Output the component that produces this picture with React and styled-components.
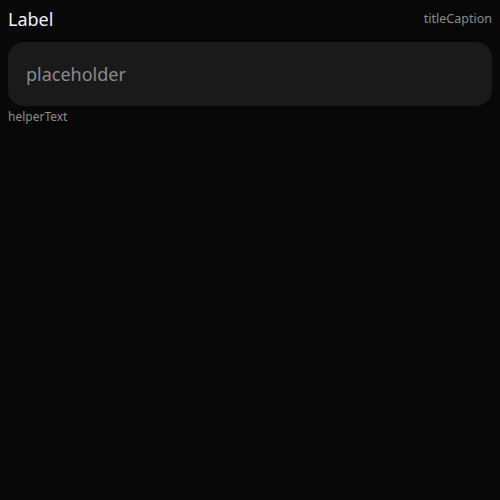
import React, { useState } from 'react'
import styled, { createGlobalStyle } from 'styled-components'

const GlobalStyle = createGlobalStyle`
  html, body {
    margin: 0;
    padding: 0;
    background: #080808;
    height: 100%;
  }
  body {
    font-family: "Noto Sans", "DejaVu Sans", sans-serif;
  }
`;

const Field = styled.div`
  display: flex;
  flex-direction: column;
  padding: 8px;
`;

const Header = styled.div`
  display: flex;
  justify-content: space-between;
  align-items: center;
  height: 22px;
  margin-bottom: 12px;
`;

const Label = styled.label`
  color: #f2f2f2;
  font-size: 18px;
  line-height: 22px;
`;

const Caption = styled.span`
  color: #8c8c8c;
  font-size: 12.5px;
  line-height: 22px;
`;

const Input = styled.input`
  box-sizing: border-box;
  width: 100%;
  height: 64px;
  border: none;
  outline: none;
  border-radius: 16px;
  background: #1a1a1a;
  padding: 0 18px;
  color: #f2f2f2;
  font-family: inherit;
  font-size: 18px;

  &::placeholder {
    color: #8a8a8a;
  }
`;

const Helper = styled.span`
  color: #8c8c8c;
  font-size: 12px;
  line-height: 16px;
  margin-top: 3px;
`;

export default function App() {
  const [value, setValue] = useState('');

  return (
    <>
      <GlobalStyle />
      <Field>
        <Header>
          <Label>Label</Label>
          <Caption>titleCaption</Caption>
        </Header>
        <Input
          placeholder="placeholder"
          value={value}
          onChange={e => setValue(e.currentTarget.value)}
        />
        <Helper>helperText</Helper>
      </Field>
    </>
  );
}
